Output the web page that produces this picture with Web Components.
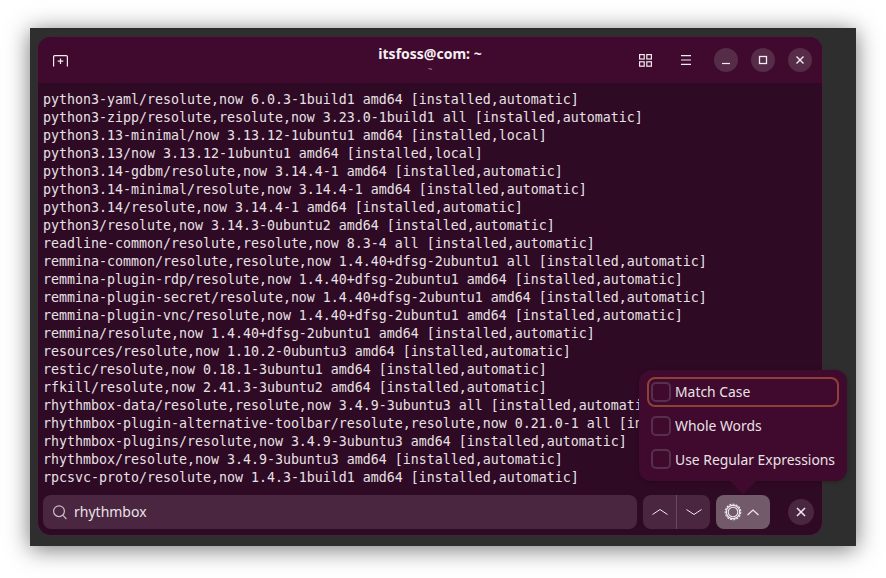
<!DOCTYPE html>
<html lang="en">
<head>
<meta charset="UTF-8">
<title>Terminal search</title>
<style>
  html, body { margin: 0; background: #fff; }
</style>
</head>
<body>
<desk-shot>
  <term-window title="itsfoss@com: ~" subtitle="~">
    <term-line>python3-yaml/resolute,now 6.0.3-1build1 amd64 [installed,automatic]</term-line>
    <term-line>python3-zipp/resolute,resolute,now 3.23.0-1build1 all [installed,automatic]</term-line>
    <term-line>python3.13-minimal/now 3.13.12-1ubuntu1 amd64 [installed,local]</term-line>
    <term-line>python3.13/now 3.13.12-1ubuntu1 amd64 [installed,local]</term-line>
    <term-line>python3.14-gdbm/resolute,now 3.14.4-1 amd64 [installed,automatic]</term-line>
    <term-line>python3.14-minimal/resolute,now 3.14.4-1 amd64 [installed,automatic]</term-line>
    <term-line>python3.14/resolute,now 3.14.4-1 amd64 [installed,automatic]</term-line>
    <term-line>python3/resolute,now 3.14.3-0ubuntu2 amd64 [installed,automatic]</term-line>
    <term-line>readline-common/resolute,resolute,now 8.3-4 all [installed,automatic]</term-line>
    <term-line>remmina-common/resolute,resolute,now 1.4.40+dfsg-2ubuntu1 all [installed,automatic]</term-line>
    <term-line>remmina-plugin-rdp/resolute,now 1.4.40+dfsg-2ubuntu1 amd64 [installed,automatic]</term-line>
    <term-line>remmina-plugin-secret/resolute,now 1.4.40+dfsg-2ubuntu1 amd64 [installed,automatic]</term-line>
    <term-line>remmina-plugin-vnc/resolute,now 1.4.40+dfsg-2ubuntu1 amd64 [installed,automatic]</term-line>
    <term-line>remmina/resolute,now 1.4.40+dfsg-2ubuntu1 amd64 [installed,automatic]</term-line>
    <term-line>resources/resolute,now 1.10.2-0ubuntu3 amd64 [installed,automatic]</term-line>
    <term-line>restic/resolute,now 0.18.1-3ubuntu1 amd64 [installed,automatic]</term-line>
    <term-line>rfkill/resolute,now 2.41.3-3ubuntu2 amd64 [installed,automatic]</term-line>
    <term-line>rhythmbox-data/resolute,resolute,now 3.4.9-3ubuntu3 all [installed,automatic]</term-line>
    <term-line>rhythmbox-plugin-alternative-toolbar/resolute,resolute,now 0.21.0-1 all [installed,automatic]</term-line>
    <term-line>rhythmbox-plugins/resolute,now 3.4.9-3ubuntu3 amd64 [installed,automatic]</term-line>
    <term-line>rhythmbox/resolute,now 3.4.9-3ubuntu3 amd64 [installed,automatic]</term-line>
    <term-line>rpcsvc-proto/resolute,now 1.4.3-1build1 amd64 [installed,automatic]</term-line>
  </term-window>
</desk-shot>

<script>
'use strict'

// small helper, every element gets an open shadow root
function define(name, html, setup) {
  customElements.define(name, class extends HTMLElement {
    connectedCallback() {
      if (this.shadowRoot) return
      this.attachShadow({ mode: 'open' }).innerHTML = html
      if (setup) setup(this)
    }
  })
}

const UI_FONT = `"Noto Sans", "Open Sans", sans-serif`

define('desk-shot', `
  <style>
    :host { display: block; width: 886px; height: 578px; padding: 28px 30px 32px; box-sizing: border-box; background: #fff; overflow: hidden; }
    .frame {
      height: 518px; background: #2e2e2e; padding: 9px 34px 11px 8px; box-sizing: border-box;
      box-shadow: 0 3px 22px rgba(0,0,0,.55);
    }
  </style>
  <div class="frame"><slot></slot></div>`)

// no whitespace in this shadow root: the host is white-space: pre
define('term-line', `<style>:host { display: block; height: 18px; line-height: 18px; white-space: pre; }</style><slot></slot>`)

define('term-header', `
  <style>
    :host { display: grid; grid-template-columns: 1fr auto 1fr; align-items: center; height: 46px; padding: 0 10px 0 15px; box-sizing: border-box; background: #3f0a2d; color: #fff; font-family: ${UI_FONT}; border-radius: 13px 13px 0 0; }
    .left, .right { display: flex; align-items: center; }
    .right { justify-content: flex-end; }
    .title { text-align: center; margin: -3px 0 0 -5px; }
    .title b { display: block; font-size: 14px; line-height: 18px; font-weight: 700; color: #f6eff3; }
    .title small { display: block; font-size: 8px; line-height: 9px; color: #a98a9d; margin-top: 1px; }
    svg { display: block; fill: none; stroke: #f2ecf0; stroke-width: 1.2; }
    .new { margin-bottom: -1px; }
    .tool { margin-right: 29px; }
    .tool.menu { margin-right: 23px; }
    .round { width: 24px; height: 24px; border-radius: 50%; background: #562c49; display: grid; place-items: center; margin-left: 13px; }
    .round:first-of-type { margin-left: 0; }
  </style>
  <div class="left">
    <svg class="new" width="15" height="12" viewBox="0 0 15 12"><path d="M.6 11.5V1.8Q.6.6 1.8.6H13.2Q14.4.6 14.4 1.8V11.5M7.5 3.5V9M4.7 6.2H10.3"/></svg>
  </div>
  <div class="title"><b><slot name="title"></slot></b><small><slot name="subtitle"></slot></small></div>
  <div class="right">
    <svg class="tool" width="13" height="13" viewBox="0 0 13 13"><rect x=".6" y=".6" width="4.6" height="4.4"/><rect x="7.8" y=".6" width="4.6" height="4.4"/><rect x=".6" y="7.8" width="4.6" height="4.4"/><rect x="7.8" y="7.8" width="4.6" height="4.4"/></svg>
    <svg class="tool menu" width="10" height="10" viewBox="0 0 10 10"><path d="M0 .6H10M0 5H10M0 9.4H10"/></svg>
    <div class="round"><svg width="10" height="10" viewBox="0 0 10 10"><path d="M1 8.5H9"/></svg></div>
    <div class="round"><svg width="10" height="10" viewBox="0 0 10 10" style="stroke-width:1.3"><rect x="1.5" y="1.5" width="7" height="7"/></svg></div>
    <div class="round"><svg width="10" height="10" viewBox="0 0 10 10" style="stroke-width:1.4"><path d="M1.5 1.5L8.5 8.5M8.5 1.5L1.5 8.5"/></svg></div>
  </div>`)

define('term-window', `
  <style>
    :host { display: flex; flex-direction: column; position: relative; height: 498px; width: 784px; background: #2f0a24; border-radius: 13px; box-shadow: 0 0 0 .5px #4d2140; }
    main { height: 412px; padding: 8px 0 0 5px; box-sizing: border-box; overflow: hidden; color: #e8e1e5; font-family: "DejaVu Sans Mono", "Liberation Mono", monospace; font-size: 13.29px; }
  </style>
  <term-header><span slot="title"></span><span slot="subtitle"></span></term-header>
  <main><slot></slot></main>
  <search-bar></search-bar>
  <search-options></search-options>`, el => {
    const spans = el.shadowRoot.querySelectorAll('term-header span')
    spans[0].textContent = el.getAttribute('title')
    spans[1].textContent = el.getAttribute('subtitle')
  })

define('search-bar', `
  <style>
    :host { display: flex; align-items: center; height: 40px; padding: 0 8px 6px 5px; box-sizing: border-box; color: #eee6eb; font-family: ${UI_FONT}; }
    .entry { flex: 1; height: 34px; border-radius: 8px; background: #4b2641; display: flex; align-items: center; padding: 0 10px; gap: 7px; font-size: 14px; color: #e9e2e6; }
    .entry span { margin-top: -2px; }
    .nav { display: flex; margin-left: 6px; height: 34px; border-radius: 8px; overflow: hidden; }
    .nav div { width: 33px; display: grid; place-items: center; background: #4b2641; }
    .nav div + div { border-left: 1px solid #6a4a61; }
    .gear { margin-left: 6px; width: 54px; height: 34px; padding-left: 8px; box-sizing: border-box; border-radius: 8px; background: #725a6b; display: flex; align-items: center; gap: 5px; }
    .close { width: 26px; height: 26px; border-radius: 50%; background: #4b2641; display: grid; place-items: center; margin-left: 18px; }
    svg { display: block; fill: none; stroke: #efe8ec; stroke-width: 1.2; }
  </style>
  <div class="entry">
    <svg width="14" height="15" viewBox="0 0 14 15" style="stroke:#c9bcc5"><circle cx="6" cy="6.2" r="5.4"/><path d="M10 10.4L13.4 14"/></svg>
    <span>rhythmbox</span>
  </div>
  <div class="nav">
    <div><svg width="16" height="8" viewBox="0 0 16 8" style="stroke-width:1"><path d="M.5 6.5L8 1.5L15.5 6.5"/></svg></div>
    <div><svg width="16" height="8" viewBox="0 0 16 8" style="stroke-width:1"><path d="M.5 1.5L8 6.5L15.5 1.5"/></svg></div>
  </div>
  <div class="gear">
    <svg width="18" height="18" viewBox="0 0 18 18"><circle cx="9" cy="9" r="4.8" stroke-width="1.1"/><circle cx="9" cy="9" r="6.7" stroke-width="1.2"/><circle cx="9" cy="9" r="7.8" stroke-width="1.1" stroke-dasharray="2.1 1.17"/></svg>
    <svg width="12" height="7" viewBox="0 0 12 7" style="stroke-width:1.2"><path d="M.5 6L6 1L11.5 6"/></svg>
  </div>
  <div class="close"><svg width="10" height="10" viewBox="0 0 10 10" style="stroke-width:1.5"><path d="M1 1L9 9M9 1L1 9"/></svg></div>`)

define('option-row', `
  <style>
    :host { display: flex; align-items: center; gap: 2px; height: 26px; padding: 0 4px 0 2px; border: 2px solid transparent; border-radius: 8px; font-size: 13.9px; color: #e9e2e6; white-space: nowrap; }
    :host([focused]) { border-color: #8f4138; }
    i { display: block; width: 20px; height: 20px; margin-right: 2px; box-sizing: border-box; border: 2px solid #57304c; border-radius: 5px; flex: none; }
  </style>
  <i></i><span><slot></slot></span>`)

define('search-options', `
  <style>
    :host { position: absolute; left: 601px; top: 333px; width: 208px; height: 111px; box-sizing: border-box; padding: 7px 8px; background: #3f0a2d; border-radius: 12px; font-family: ${UI_FONT}; display: flex; flex-direction: column; gap: 4px; box-shadow: 0 1px 4px rgba(0,0,0,.25); }
    .arrow { position: absolute; left: 91px; top: 111px; width: 0; height: 0; border: 13px solid transparent; border-top-color: #3f0a2d; border-bottom: 0; }
  </style>
  <option-row focused>Match Case</option-row>
  <option-row>Whole Words</option-row>
  <option-row>Use Regular Expressions</option-row>
  <div class="arrow"></div>`)
</script>
</body>
</html>
